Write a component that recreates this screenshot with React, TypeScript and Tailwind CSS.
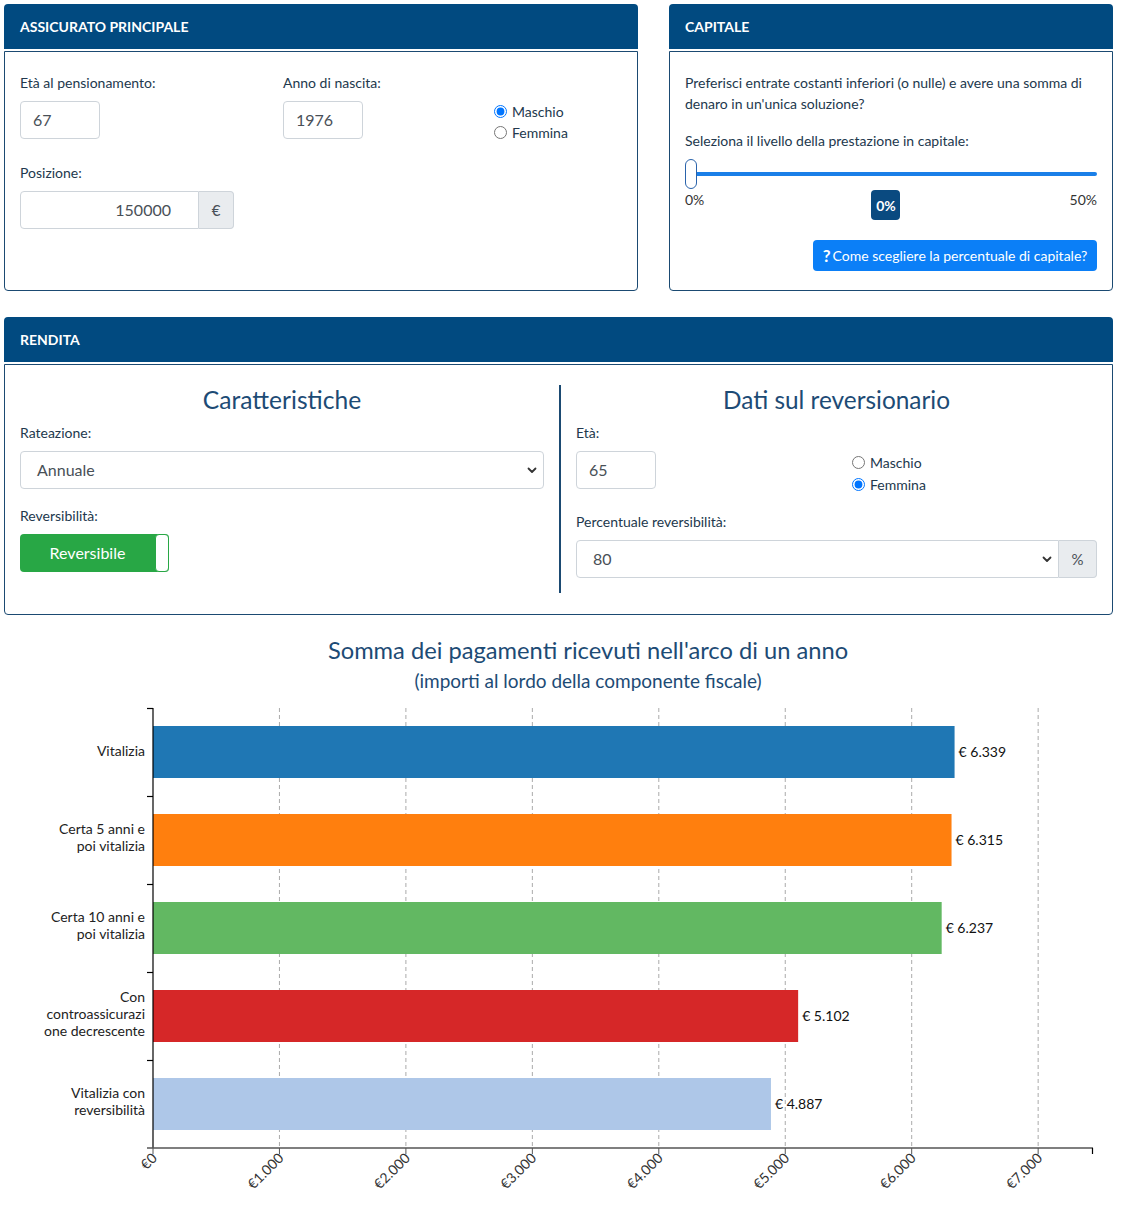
import React from "react";

function CardHeader({ title }: { title: string }) {
  return (
    <div className="h-[45px] rounded-t-[4px] bg-[#014a80] px-[16px] flex items-center text-white font-bold text-[14px]">
      {title}
    </div>
  );
}

function Label({ children }: { children: React.ReactNode }) {
  return <div className="text-[14px] leading-[21px] text-[#22384d]">{children}</div>;
}

function TextBox({ value, w }: { value: string; w: string }) {
  return (
    <div className={`${w} h-[38px] border border-[#ced4da] rounded-[4px] bg-white flex items-center px-[12px] text-[16px] text-[#495057]`}>
      {value}
    </div>
  );
}

function Radio({ checked, label }: { checked: boolean; label: string }) {
  return (
    <label className="flex items-center gap-[5px] h-[22px] text-[14px] text-[#22384d]">
      <input
        type="radio"
        readOnly
        checked={checked}
        className="w-[13px] h-[13px] m-0 accent-[#0075ff]"
      />
      {label}
    </label>
  );
}

function Chevron() {
  return (
    <svg width="10" height="7" viewBox="0 0 10 7" className="shrink-0">
      <path d="M1.5 1.5 L5 5 L8.5 1.5" fill="none" stroke="#333" strokeWidth="1.8" strokeLinecap="round" strokeLinejoin="round" />
    </svg>
  );
}

const bars = [
  { label: ["Vitalizia"], value: 6339, text: "€ 6.339", color: "#1f77b4" },
  { label: ["Certa 5 anni e", "poi vitalizia"], value: 6315, text: "€ 6.315", color: "#ff7f0e" },
  { label: ["Certa 10 anni e", "poi vitalizia"], value: 6237, text: "€ 6.237", color: "#62b862" },
  { label: ["Con", "controassicurazi", "one decrescente"], value: 5102, text: "€ 5.102", color: "#d62728" },
  { label: ["Vitalizia con", "reversibilità"], value: 4887, text: "€ 4.887", color: "#aec7e8" },
];

function Chart() {
  const x0 = 153;
  const scale = 126.45 / 1000;
  const top = 8;
  const bottom = 448;
  const band = 88;
  const ticks = [0, 1000, 2000, 3000, 4000, 5000, 6000, 7000];
  const tickLabels = ["€0", "€1.000", "€2.000", "€3.000", "€4.000", "€5.000", "€6.000", "€7.000"];
  return (
    <svg width="1122" height="508" className="block" style={{ fontFamily: "Lato, 'Noto Sans', sans-serif" }}>
      {ticks.slice(1).map((t) => {
        const x = x0 + t * scale;
        return (
          <line key={t} x1={x} x2={x} y1={top} y2={bottom} stroke="#aaa" strokeWidth="1" strokeDasharray="4 3" />
        );
      })}
      {bars.map((b, i) => {
        const y = top + i * band + 18;
        const w = b.value * scale;
        const cy = y + 26;
        const n = b.label.length;
        return (
          <g key={i}>
            <rect x={x0} y={y} width={w} height={52} fill={b.color} />
            <text x={x0 + w + 4} y={cy + 5} fontSize="14" fill="#111">
              {b.text}
            </text>
            {b.label.map((l, j) => (
              <text
                key={j}
                x={145}
                y={cy + 4 - (n > 1 ? 1.5 : 0) + (j - (n - 1) / 2) * 17}
                fontSize="14"
                fill="#222"
                textAnchor="end"
              >
                {l}
              </text>
            ))}
          </g>
        );
      })}
      <line x1={x0} x2={x0} y1={top} y2={bottom} stroke="#000" strokeWidth="1.2" />
      {[0, 1, 2, 3, 4].map((i) => (
        <line key={i} x1={147} x2={x0} y1={top + i * band + 0.5} y2={top + i * band + 0.5} stroke="#000" strokeWidth="1.2" />
      ))}
      <line x1={147} x2={1093} y1={bottom} y2={bottom} stroke="#555" strokeWidth="1.6" />
      <line x1={1092.5} x2={1092.5} y1={bottom} y2={bottom + 6} stroke="#000" strokeWidth="1.2" />
      {ticks.map((t, i) => {
        const x = x0 + t * scale;
        return (
          <g key={t}>
            <line x1={x} x2={x} y1={bottom} y2={bottom + 6} stroke="#555" strokeWidth="1" />
            <text
              transform={`translate(${x + 5}, ${bottom + 11}) rotate(-45)`}
              textAnchor="end"
              fontSize="14"
              fill="#333"
            >
              {tickLabels[i]}
            </text>
          </g>
        );
      })}
    </svg>
  );
}

export default function App() {
  return (
    <div className="w-[1122px] bg-white pt-[4px] text-[#22384d]" style={{ fontFamily: "Lato, 'Noto Sans', sans-serif" }}>
      {/* Top row */}
      <div className="flex pl-[4px] gap-[31px]">
        {/* Assicurato principale */}
        <div className="w-[634px]">
          <CardHeader title="ASSICURATO PRINCIPALE" />
          <div className="mt-[2px] h-[240px] border border-[#1b4a72] rounded-b-[4px] px-[15px] pt-[20px]">
            <div className="flex h-[67px]">
              <div className="w-[263px]">
                <Label>Età al pensionamento:</Label>
                <div className="mt-[8px]">
                  <TextBox value="67" w="w-[80px]" />
                </div>
              </div>
              <div className="w-[211px]">
                <Label>Anno di nascita:</Label>
                <div className="mt-[8px]">
                  <TextBox value="1976" w="w-[80px]" />
                </div>
              </div>
              <div className="pt-[29px] flex flex-col">
                <Radio checked label="Maschio" />
                <Radio checked={false} label="Femmina" />
              </div>
            </div>
            <div className="mt-[23px]">
              <Label>Posizione:</Label>
              <div className="mt-[8px] flex w-[214px] h-[38px]">
                <div className="flex-1 border border-[#ced4da] rounded-l-[4px] flex items-center justify-end pr-[27px] text-[16px] text-[#495057]">
                  150000
                </div>
                <div className="w-[35px] border border-l-0 border-[#ced4da] rounded-r-[4px] bg-[#e9ecef] flex items-center justify-center text-[15px] text-[#495057]">
                  €
                </div>
              </div>
            </div>
          </div>
        </div>

        {/* Capitale */}
        <div className="w-[444px]">
          <CardHeader title="CAPITALE" />
          <div className="mt-[2px] h-[240px] border border-[#1b4a72] rounded-b-[4px] px-[15px] pt-[20px]">
            <div className="text-[14px] leading-[21px] text-[#22384d]">
              Preferisci entrate costanti inferiori (o nulle) e avere una somma di denaro in un'unica soluzione?
            </div>
            <div className="mt-[16px]">
              <Label>Seleziona il livello della prestazione in capitale:</Label>
            </div>
            <div className="relative mt-[8px] h-[30px]">
              <div className="absolute left-[5px] right-0 top-[13px] h-[4px] rounded-full bg-[#1a7fe8]" />
              <div className="absolute left-0 top-0 w-[12px] h-[30px] rounded-[6px] bg-white border-[1.5px] border-[#2a63ab]" />
            </div>
            <div className="flex items-start justify-between h-[31px]">
              <div className="text-[14px] leading-[21px] text-[#333]">0%</div>
              <div className="mt-[1px] ml-[-2px] w-[29px] h-[30px] rounded-[4px] bg-[#0a4a80] text-white font-bold text-[14px] flex items-center justify-center">
                0%
              </div>
              <div className="text-[14px] leading-[21px] text-[#333]">50%</div>
            </div>
            <div className="flex justify-end mt-[20px]">
              <div className="h-[31px] w-[284px] rounded-[4px] bg-[#0b7ff7] text-white text-[14px] flex items-center justify-center gap-[2px]">
                <span className="font-bold text-[17px] leading-none">?</span>
                <span>Come scegliere la percentuale di capitale?</span>
              </div>
            </div>
          </div>
        </div>
      </div>

      {/* Rendita */}
      <div className="pl-[4px] mt-[26px] w-[1113px]">
        <CardHeader title="RENDITA" />
        <div className="mt-[2px] h-[251px] border border-[#1b4a72] rounded-b-[4px] px-[15px] pt-[20px] flex">
          {/* Left column */}
          <div className="w-[524px]">
            <div className="text-center text-[24.6px] leading-[30px] text-[#1d4b75]">Caratteristiche</div>
            <div className="mt-[7px]">
              <Label>Rateazione:</Label>
            </div>
            <div className="mt-[8px] h-[38px] border border-[#ced4da] rounded-[4px] flex items-center justify-between pl-[16px] pr-[6px] text-[16px] text-[#495057]">
              <span>Annuale</span>
              <Chevron />
            </div>
            <div className="mt-[16px]">
              <Label>Reversibilità:</Label>
            </div>
            <div className="mt-[8px] w-[149px] h-[38px] rounded-[4px] bg-[#28a745] flex items-center">
              <div className="flex-1 text-center text-white text-[16px]">Reversibile</div>
              <div className="w-[14px] h-[38px] bg-white border border-[#28a745] rounded-[4px]" />
            </div>
          </div>
          {/* Divider */}
          <div className="ml-[15px] w-[2px] h-[208px] bg-[#1b4a72]" />
          {/* Right column */}
          <div className="ml-[15px] w-[521px]">
            <div className="text-center text-[24.4px] leading-[30px] text-[#1d4b75]">Dati sul reversionario</div>
            <div className="mt-[7px]">
              <Label>Età:</Label>
            </div>
            <div className="mt-[8px] flex">
              <TextBox value="65" w="w-[80px]" />
              <div className="ml-[196px] flex flex-col">
                <Radio checked={false} label="Maschio" />
                <Radio checked label="Femmina" />
              </div>
            </div>
            <div className="mt-[16px]">
              <Label>Percentuale reversibilità:</Label>
            </div>
            <div className="mt-[8px] flex h-[38px]">
              <div className="flex-1 border border-[#ced4da] rounded-l-[4px] flex items-center justify-between pl-[16px] pr-[6px] text-[16px] text-[#495057]">
                <span>80</span>
                <Chevron />
              </div>
              <div className="w-[38px] border border-l-0 border-[#ced4da] rounded-r-[4px] bg-[#e9ecef] flex items-center justify-center text-[15px] text-[#495057]">
                %
              </div>
            </div>
          </div>
        </div>
      </div>

      {/* Chart title */}
      <div className="mt-[20px] pl-[54px] text-center">
        <div className="text-[23.7px] leading-[30px] text-[#1d4b75]">Somma dei pagamenti ricevuti nell'arco di un anno</div>
        <div className="text-[19px] leading-[26px] text-[#1d4b75] mt-[3px]">(importi al lordo della componente fiscale)</div>
      </div>
      <div className="mt-[6px]">
        <Chart />
      </div>
    </div>
  );
}
